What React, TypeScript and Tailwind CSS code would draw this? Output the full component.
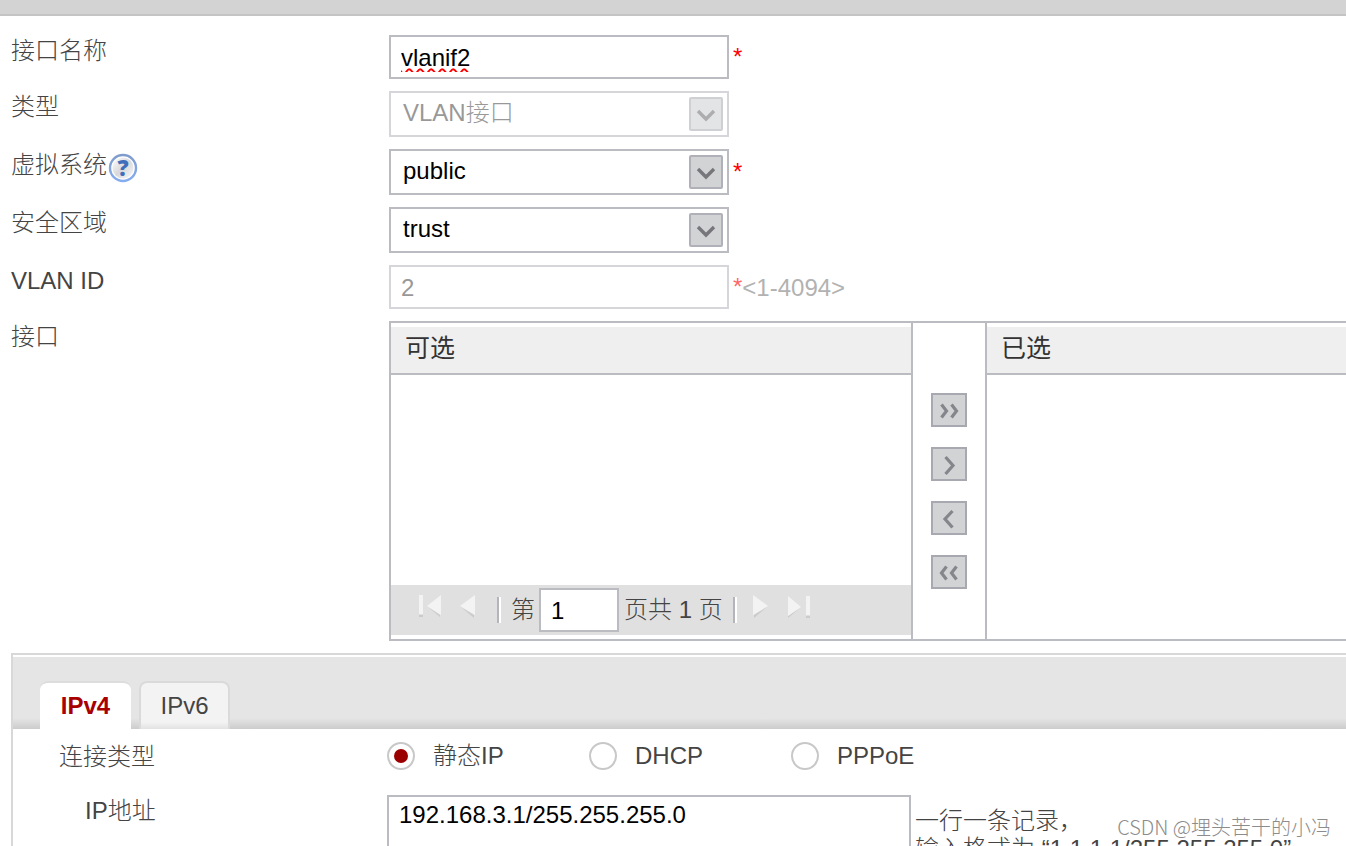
import React, { useState } from "react";

const connectionTypes = [
  { value: "static", label: "静态IP" },
  { value: "dhcp", label: "DHCP" },
  { value: "pppoe", label: "PPPoE" },
];

const moveButtons = [
  { name: "全部添加", paths: ["M10.5 11.5 15.5 18l-5 6.5", "M20.5 11.5 25.5 18l-5 6.5"] },
  { name: "添加", paths: ["M14.5 10 22 18.5l-7.5 8.5"] },
  { name: "移除", paths: ["M21.5 10 14 18l7.5 8.5"] },
  { name: "全部移除", paths: ["M15.5 11.5 10.5 18l5 6.5", "M25.5 11.5 20.5 18l5 6.5"] },
];

interface FieldProps {
  id: string;
  label: string;
  help?: boolean;
  children: React.ReactNode;
}

const HelpIcon: React.FC = () => (
  <svg className="mt-1 ml-px h-[30px] w-[30px]" viewBox="0 0 30 30" role="img" aria-label="帮助">
    <defs>
      <linearGradient id="helpRing" x1="0" y1="0" x2="0" y2="1">
        <stop offset="0" stopColor="#7f9ccc" />
        <stop offset="1" stopColor="#86adf0" />
      </linearGradient>
      <linearGradient id="helpFace" x1="0" y1="0" x2="1" y2="1">
        <stop offset="0" stopColor="#ffffff" />
        <stop offset="0.5" stopColor="#d8d8dc" />
        <stop offset="1" stopColor="#fafafa" />
      </linearGradient>
    </defs>
    <circle cx="15" cy="15" r="13" fill="#ffffff" stroke="url(#helpRing)" strokeWidth="2.4" />
    <circle cx="15" cy="15" r="10.5" fill="url(#helpFace)" />
    <text x="15" y="22.5" textAnchor="middle" fontSize="22" fontWeight="800" fill="#3f6fba" fontFamily="Open Sans, sans-serif">
      ?
    </text>
  </svg>
);

const Field: React.FC<FieldProps> = ({ id, label, help, children }) => (
  <div className="flex items-start">
    <div className="flex w-[378px] shrink-0 items-start text-[#444]">
      <label htmlFor={id} className="leading-8">{label}</label>
      {help && <HelpIcon />}
    </div>
    {children}
  </div>
);

const Required: React.FC = () => <span className="ml-1 text-[#ff0000]">*</span>;

interface DropdownProps {
  id: string;
  options: string[];
  disabled?: boolean;
}

const Dropdown: React.FC<DropdownProps> = ({ id, options, disabled }) => (
  <div className="relative w-[340px]">
    <select
      id={id}
      disabled={disabled}
      className="h-[46px] w-full appearance-none border-2 border-[#bbbbc2] bg-white pr-10 pb-[2px] pl-3 text-black disabled:text-[#555] disabled:opacity-100"
    >
      {options.map((option) => (
        <option key={option}>{option}</option>
      ))}
    </select>
    <svg className="pointer-events-none absolute top-[6px] right-[6px] h-[34px] w-[34px]" viewBox="0 0 34 34" fill="none">
      <rect x="1" y="1" width="32" height="32" rx="1" fill="#d2d3d5" stroke="#b0b1b8" strokeWidth="2" />
      <path d="m9 14 8 8 8-8" stroke="#77777b" strokeWidth="3.4" />
    </svg>
  </div>
);

const ListHeader: React.FC<{ title: string }> = ({ title }) => (
  <h2 className="h-[52px] border-t-4 border-b-2 border-t-white border-b-[#bbbbc2] bg-[#efefef] pl-[14px] text-[25px] leading-[42px] font-normal text-[#333]">
    {title}
  </h2>
);

const PagerDivider: React.FC = () => <span className="h-[26px] w-1 border-r-2 border-l-2 border-r-white border-l-[#b4b4ba]" />;

const App: React.FC = () => {
  const [name, setName] = useState("vlanif2");
  const [page, setPage] = useState("1");
  const [tab, setTab] = useState("IPv4");
  const [connection, setConnection] = useState("static");
  const [address, setAddress] = useState("192.168.3.1/255.255.255.0");

  return (
    <div className="relative h-screen overflow-hidden bg-white font-['Liberation_Sans','Noto_Sans_CJK_SC',sans-serif] text-2xl font-light">
      {/* Top bar */}
      <div className="h-4 border-b-2 border-[#c4c4c4] bg-[#d3d3d3]"></div>

      {/* Interface settings */}
      <form className="flex flex-col gap-3 pt-[19px] pl-[11px]">
        <Field id="name" label="接口名称">
          <div className="flex items-center">
            <input
              id="name"
              value={name}
              spellCheck={false}
              onChange={(e) => setName(e.target.value)}
              className="h-11 w-[340px] border-2 border-[#bbbbc2] px-[10px] pt-[2px] text-black underline decoration-[#ff0000] decoration-wavy decoration-2 underline-offset-2"
            />
            <Required />
          </div>
        </Field>
        <Field id="type" label="类型">
          <div className="opacity-60">
            <Dropdown id="type" options={["VLAN接口"]} disabled />
          </div>
        </Field>
        <Field id="vsys" label="虚拟系统" help>
          <div className="flex items-center">
            <Dropdown id="vsys" options={["public"]} />
            <Required />
          </div>
        </Field>
        <Field id="zone" label="安全区域">
          <Dropdown id="zone" options={["trust", "untrust", "dmz"]} />
        </Field>
        <Field id="vlan" label="VLAN ID">
          <div className="flex items-center opacity-60">
            <input id="vlan" value="2" disabled className="h-11 w-[340px] border-2 border-[#bbbbc2] px-[10px] pt-[2px] text-[#555]" />
            <Required />
            <span className="pt-[2px] text-[#808080]">&lt;1-4094&gt;</span>
          </div>
        </Field>

        {/* Interface picker */}
        <div className="flex items-start">
          <span className="w-[378px] shrink-0 leading-8 text-[#444]">接口</span>
          <div className="flex h-80 min-w-0 flex-1 border-y-2 border-[#bbbbc2]">
            <section className="flex w-[524px] shrink-0 flex-col border-x-2 border-[#bbbbc2]">
              <ListHeader title="可选" />
              <div className="flex-1"></div>
              <div className="mb-1 flex h-[50px] items-center bg-[#e0e0e0] text-[#444]">
                <button type="button" aria-label="首页" className="ml-[26px] pb-2">
                  <svg className="block" width="26" height="26" viewBox="0 0 26 26">
                    <path d="M2 22h4v2H2zM23 22 11 14l12 10z" fill="#cbcbcb" />
                    <path d="M2 2h4v19H2zM24 2v20L10 13z" fill="#f3f3f3" />
                  </svg>
                </button>
                <button type="button" aria-label="上一页" className="ml-4 pb-2">
                  <svg className="block" width="20" height="26" viewBox="0 0 20 26">
                    <path d="M15 22 2 14l13 11z" fill="#cbcbcb" />
                    <path d="M16 2v20L1 13z" fill="#f3f3f3" />
                  </svg>
                </button>
                <span className="ml-[18px] flex"><PagerDivider /></span>
                <label htmlFor="page" className="ml-[10px]">第</label>
                <input
                  id="page"
                  value={page}
                  onChange={(e) => setPage(e.target.value)}
                  className="ml-1 h-11 w-20 border-2 border-[#bbbbc2] bg-white px-[10px] pt-[2px] text-black"
                />
                <span className="ml-[5px]">页共 1 页</span>
                <span className="ml-[10px] flex"><PagerDivider /></span>
                <button type="button" aria-label="下一页" className="ml-4 pb-2">
                  <svg className="block" width="20" height="26" viewBox="0 0 20 26">
                    <path d="m1 22 13-8L1 25z" fill="#cbcbcb" />
                    <path d="M0 2v20l15-9z" fill="#f3f3f3" />
                  </svg>
                </button>
                <button type="button" aria-label="末页" className="ml-[14px] pb-2">
                  <svg className="block" width="26" height="26" viewBox="0 0 26 26">
                    <path d="M19 23h4v2h-4zM1 23l12-8L1 25z" fill="#cbcbcb" />
                    <path d="M19 3h4v19h-4zM1 3v20l13-9z" fill="#f3f3f3" />
                  </svg>
                </button>
              </div>
            </section>
            <div className="flex w-[72px] shrink-0 flex-col items-center gap-5 pt-[70px]">
              {moveButtons.map((button) => (
                <button key={button.name} type="button" aria-label={button.name} className="h-[34px] w-9">
                  <svg className="block h-full w-full" viewBox="0 0 36 34" fill="none">
                    <rect x="1" y="1" width="34" height="32" fill="#d2d3d5" stroke="#a7a8b0" strokeWidth="2" />
                    {button.paths.map((d) => (
                      <path key={d} d={d} stroke="#85868c" strokeWidth="3.2" />
                    ))}
                  </svg>
                </button>
              ))}
            </div>
            <section className="min-w-0 flex-1 border-l-2 border-[#bbbbc2]">
              <ListHeader title="已选" />
            </section>
          </div>
        </div>
      </form>

      {/* IP settings */}
      <div className="mt-3 ml-[11px] border-t-2 border-l-2 border-[#d8d8d8] pt-[2px]">
        <div role="tablist" className="flex h-[72px] items-end gap-2 bg-linear-to-b from-[#e5e5e5] from-85% to-[#cccccc] pl-[27px]">
          {["IPv4", "IPv6"].map((item) => (
            <button
              key={item}
              type="button"
              role="tab"
              aria-selected={tab === item}
              onClick={() => setTab(item)}
              className={
                tab === item
                  ? "h-12 w-[91px] rounded-t-lg border-t-2 border-[#dddddd] bg-white font-bold text-[#a80000]"
                  : "h-12 w-[91px] rounded-t-lg border-2 border-b-0 border-[#dadada] bg-linear-to-b from-[#f3f3f3] from-85% to-[#e2e2e2] font-normal text-[#444]"
              }
            >
              {item}
            </button>
          ))}
        </div>

        <div className="flex items-center pt-[10px] pl-[46px] text-[#444]">
          <span className="w-[328px] shrink-0 pt-[2px] leading-8">连接类型</span>
          <div role="radiogroup" aria-label="连接类型" className="flex">
            {connectionTypes.map((type) => (
              <label key={type.value} className="flex w-[202px] items-center gap-[18px]">
                <input
                  type="radio"
                  name="connection"
                  value={type.value}
                  checked={connection === type.value}
                  onChange={() => setConnection(type.value)}
                  className="grid h-7 w-7 appearance-none place-content-center rounded-full border-2 border-[#c8c8c8] bg-white before:h-[14px] before:w-[14px] before:rounded-full checked:before:bg-[#9b0000]"
                />
                {type.label}
              </label>
            ))}
          </div>
        </div>

        <div className="flex items-start pt-[22px] pl-[72px] text-[#444]">
          <label htmlFor="address" className="w-[302px] shrink-0 leading-8">IP地址</label>
          <textarea
            id="address"
            value={address}
            spellCheck={false}
            onChange={(e) => setAddress(e.target.value)}
            className="h-32 w-[524px] shrink-0 resize-none border-2 border-[#bbbbc2] px-[10px] py-1 leading-7 text-black"
          />
          <p className="ml-1 pt-3 leading-7 whitespace-nowrap">
            一行一条记录，
            <br />
            输入格式为 “1.1.1.1/255.255.255.0”
          </p>
        </div>
      </div>

      {/* Watermark */}
      <span className="absolute right-[15px] bottom-[5px] font-['Noto_Sans_CJK_SC',sans-serif] text-xl text-[#8c8c8c]">
        CSDN @埋头苦干的小冯
      </span>
    </div>
  );
};

export default App;
